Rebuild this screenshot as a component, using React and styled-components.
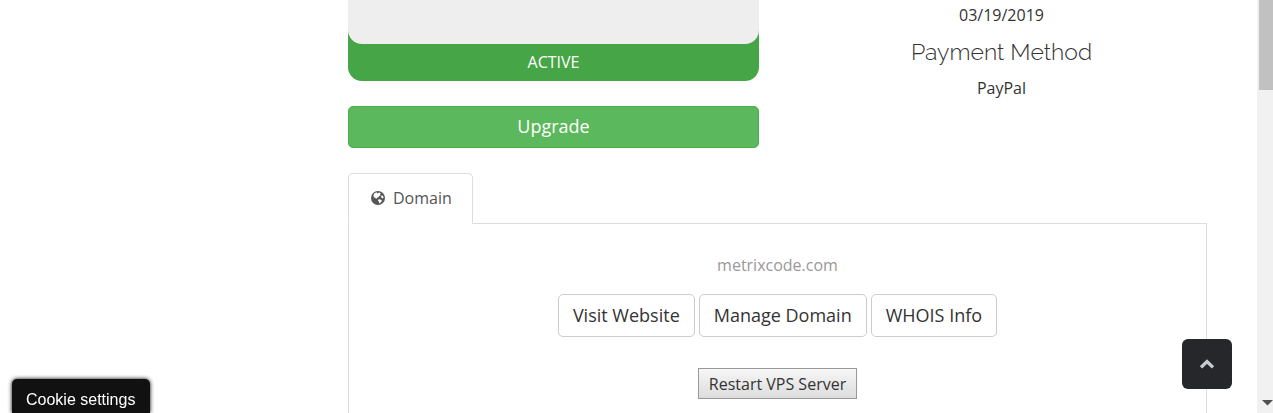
import React from "react";
import styled, { createGlobalStyle, css } from "styled-components";

const GlobalStyle = createGlobalStyle`
  *, *::before, *::after { box-sizing: border-box; }
  body {
    margin: 0;
    background: #fff;
    color: #333;
    font: 400 16px/24px "Open Sans", sans-serif;
    overflow: hidden;
  }
  button, a { font-family: inherit; }
  button { cursor: pointer; }
`;

const Page = styled.div`
  display: flex;
  height: 100vh;
  overflow: hidden;
`;

const Main = styled.main`
  flex: 1;
  min-width: 0;
  display: flex;
  flex-direction: column;
  padding: 0 50px 0 348px;
`;

const Summary = styled.section`
  display: grid;
  grid-template-columns: 1fr 1fr;
  gap: 37px;
  margin-bottom: 25px;
`;

const StatusCard = styled.div`
  background: #46a546;
  border-radius: 0 0 14px 14px;
  color: #fff;
  text-align: center;
  margin-bottom: 25px;
`;

const StatusTop = styled.div`
  height: 44px;
  background: #eee;
  border-radius: 0 0 14px 14px;
`;

const StatusLabel = styled.div`
  padding: 6px 0 7px;
`;

const Button = styled.button`
  padding: 8px 14px;
  border: 1px solid #ccc;
  border-radius: 5px;
  background: #fff;
  color: #333;
  font-size: 18px;
  line-height: 25px;
  ${(p) =>
    p.$primary &&
    css`
      display: block;
      width: 100%;
      padding: 7px 16px 9px;
      line-height: 24px;
      background: #5cb85c;
      border-color: #4cae4c;
      color: #fff;
    `}
`;

const Billing = styled.div`
  padding-top: 3px;
  text-align: center;
`;

const BillingTitle = styled.h4`
  margin: 11px 0 10px;
  font: 300 23px/28px Raleway, Lato, sans-serif;
`;

const Tabs = styled.div`
  display: flex;
`;

const Tab = styled.button`
  display: flex;
  align-items: center;
  gap: 8px;
  height: 51px;
  margin-bottom: -1px;
  padding: 0 20px 2px 22px;
  border: 1px solid #ddd;
  border-bottom-color: #fff;
  border-radius: 5px 5px 0 0;
  background: #fff;
  color: #555;
  font-size: 16px;
  line-height: 24px;
  position: relative;
`;

const Panel = styled.section`
  flex: 1;
  display: flex;
  flex-direction: column;
  align-items: center;
  padding-top: 29px;
  border: 1px solid #ddd;
  border-bottom: 0;
`;

const DomainName = styled.div`
  color: #999;
  margin-bottom: 17px;
`;

const Actions = styled.div`
  display: flex;
  gap: 4px;
  margin-bottom: 31px;
`;

const RestartButton = styled.button`
  padding: 3px 10px 2px;
  border: 1px solid #999;
  border-radius: 0;
  background: linear-gradient(#f6f6f6, #ddd);
  color: #333;
  font-size: 16px;
  line-height: 24px;
`;

const CookieButton = styled.button`
  position: fixed;
  left: 12px;
  bottom: 0;
  padding: 10px 15px 3px 14px;
  border: 0;
  border-radius: 5px 5px 0 0;
  background: #111;
  color: #fff;
  box-shadow: 0 0 4px #000;
  && { font: 16px/21px "Liberation Sans", Arial, sans-serif; }
`;

const TopLink = styled.a`
  position: fixed;
  right: 41px;
  bottom: 24px;
  width: 50px;
  height: 50px;
  display: grid;
  place-items: center;
  border-radius: 6px;
  background: #25272b;
  color: #c5ccd3;
`;

const Track = styled.div`
  width: 16px;
  display: flex;
  flex-direction: column;
  justify-content: space-between;
  align-items: flex-end;
  padding-bottom: 6px;
  background: #f1f1f1;
`;

const Thumb = styled.div`
  width: 14px;
  height: 90px;
  background: #c1c1c1;
`;

const GlobeIcon = () => (
  <svg width="14" height="14" viewBox="0 0 14 14" aria-hidden="true">
    <circle cx="7" cy="7" r="7" fill="currentColor" />
    <path
      d="M3.2 2.4 5.4 1.3 6.6 2.4 8 1.4 10 2.2 8.8 3.2 9.8 4.2 8.2 5 7.4 6.2 6 6.8 5.6 7.8 4.6 7.2 3 6.2 2.4 4.4Z M10.2 4.8 11.8 4.4 12.6 6.6 11.4 7.4 10.2 6.4Z M7.2 8.6 8.8 8.2 10.6 9.2 11 10 9.6 11.6 8.2 12.6 8 10.8 7 9.8Z"
      fill="#fff"
    />
  </svg>
);

const ChevronIcon = () => (
  <svg width="16" height="10" viewBox="0 0 16 10" aria-hidden="true">
    <path d="M2 8.400 8 2.600 14 8.400" fill="none" stroke="currentColor" strokeWidth="3.4" />
  </svg>
);

export default function App() {
  return (
    <>
      <GlobalStyle />
      <Page>
        <Main>
          <Summary>
            <div>
              <StatusCard>
                <StatusTop />
                <StatusLabel>ACTIVE</StatusLabel>
              </StatusCard>
              <Button $primary type="button">Upgrade</Button>
            </div>
            <Billing>
              <div>03/19/2019</div>
              <BillingTitle>Payment Method</BillingTitle>
              <div>PayPal</div>
            </Billing>
          </Summary>
          <Tabs role="tablist">
            <Tab type="button" role="tab" aria-selected="true">
              <GlobeIcon />
              Domain
            </Tab>
          </Tabs>
          <Panel role="tabpanel">
            <DomainName>metrixcode.com</DomainName>
            <Actions>
              <Button type="button">Visit Website</Button>
              <Button type="button">Manage Domain</Button>
              <Button type="button">WHOIS Info</Button>
            </Actions>
            <RestartButton type="button">Restart VPS Server</RestartButton>
          </Panel>
        </Main>
        <Track aria-hidden="true">
          <Thumb />
          <svg width="14" height="8" viewBox="0 0 14 8">
            <path d="M3 1h11L8.5 6.5z" fill="#505050" />
          </svg>
        </Track>
      </Page>
      <CookieButton type="button">Cookie settings</CookieButton>
      <TopLink href="#" aria-label="Back to top">
        <ChevronIcon />
      </TopLink>
    </>
  );
}
